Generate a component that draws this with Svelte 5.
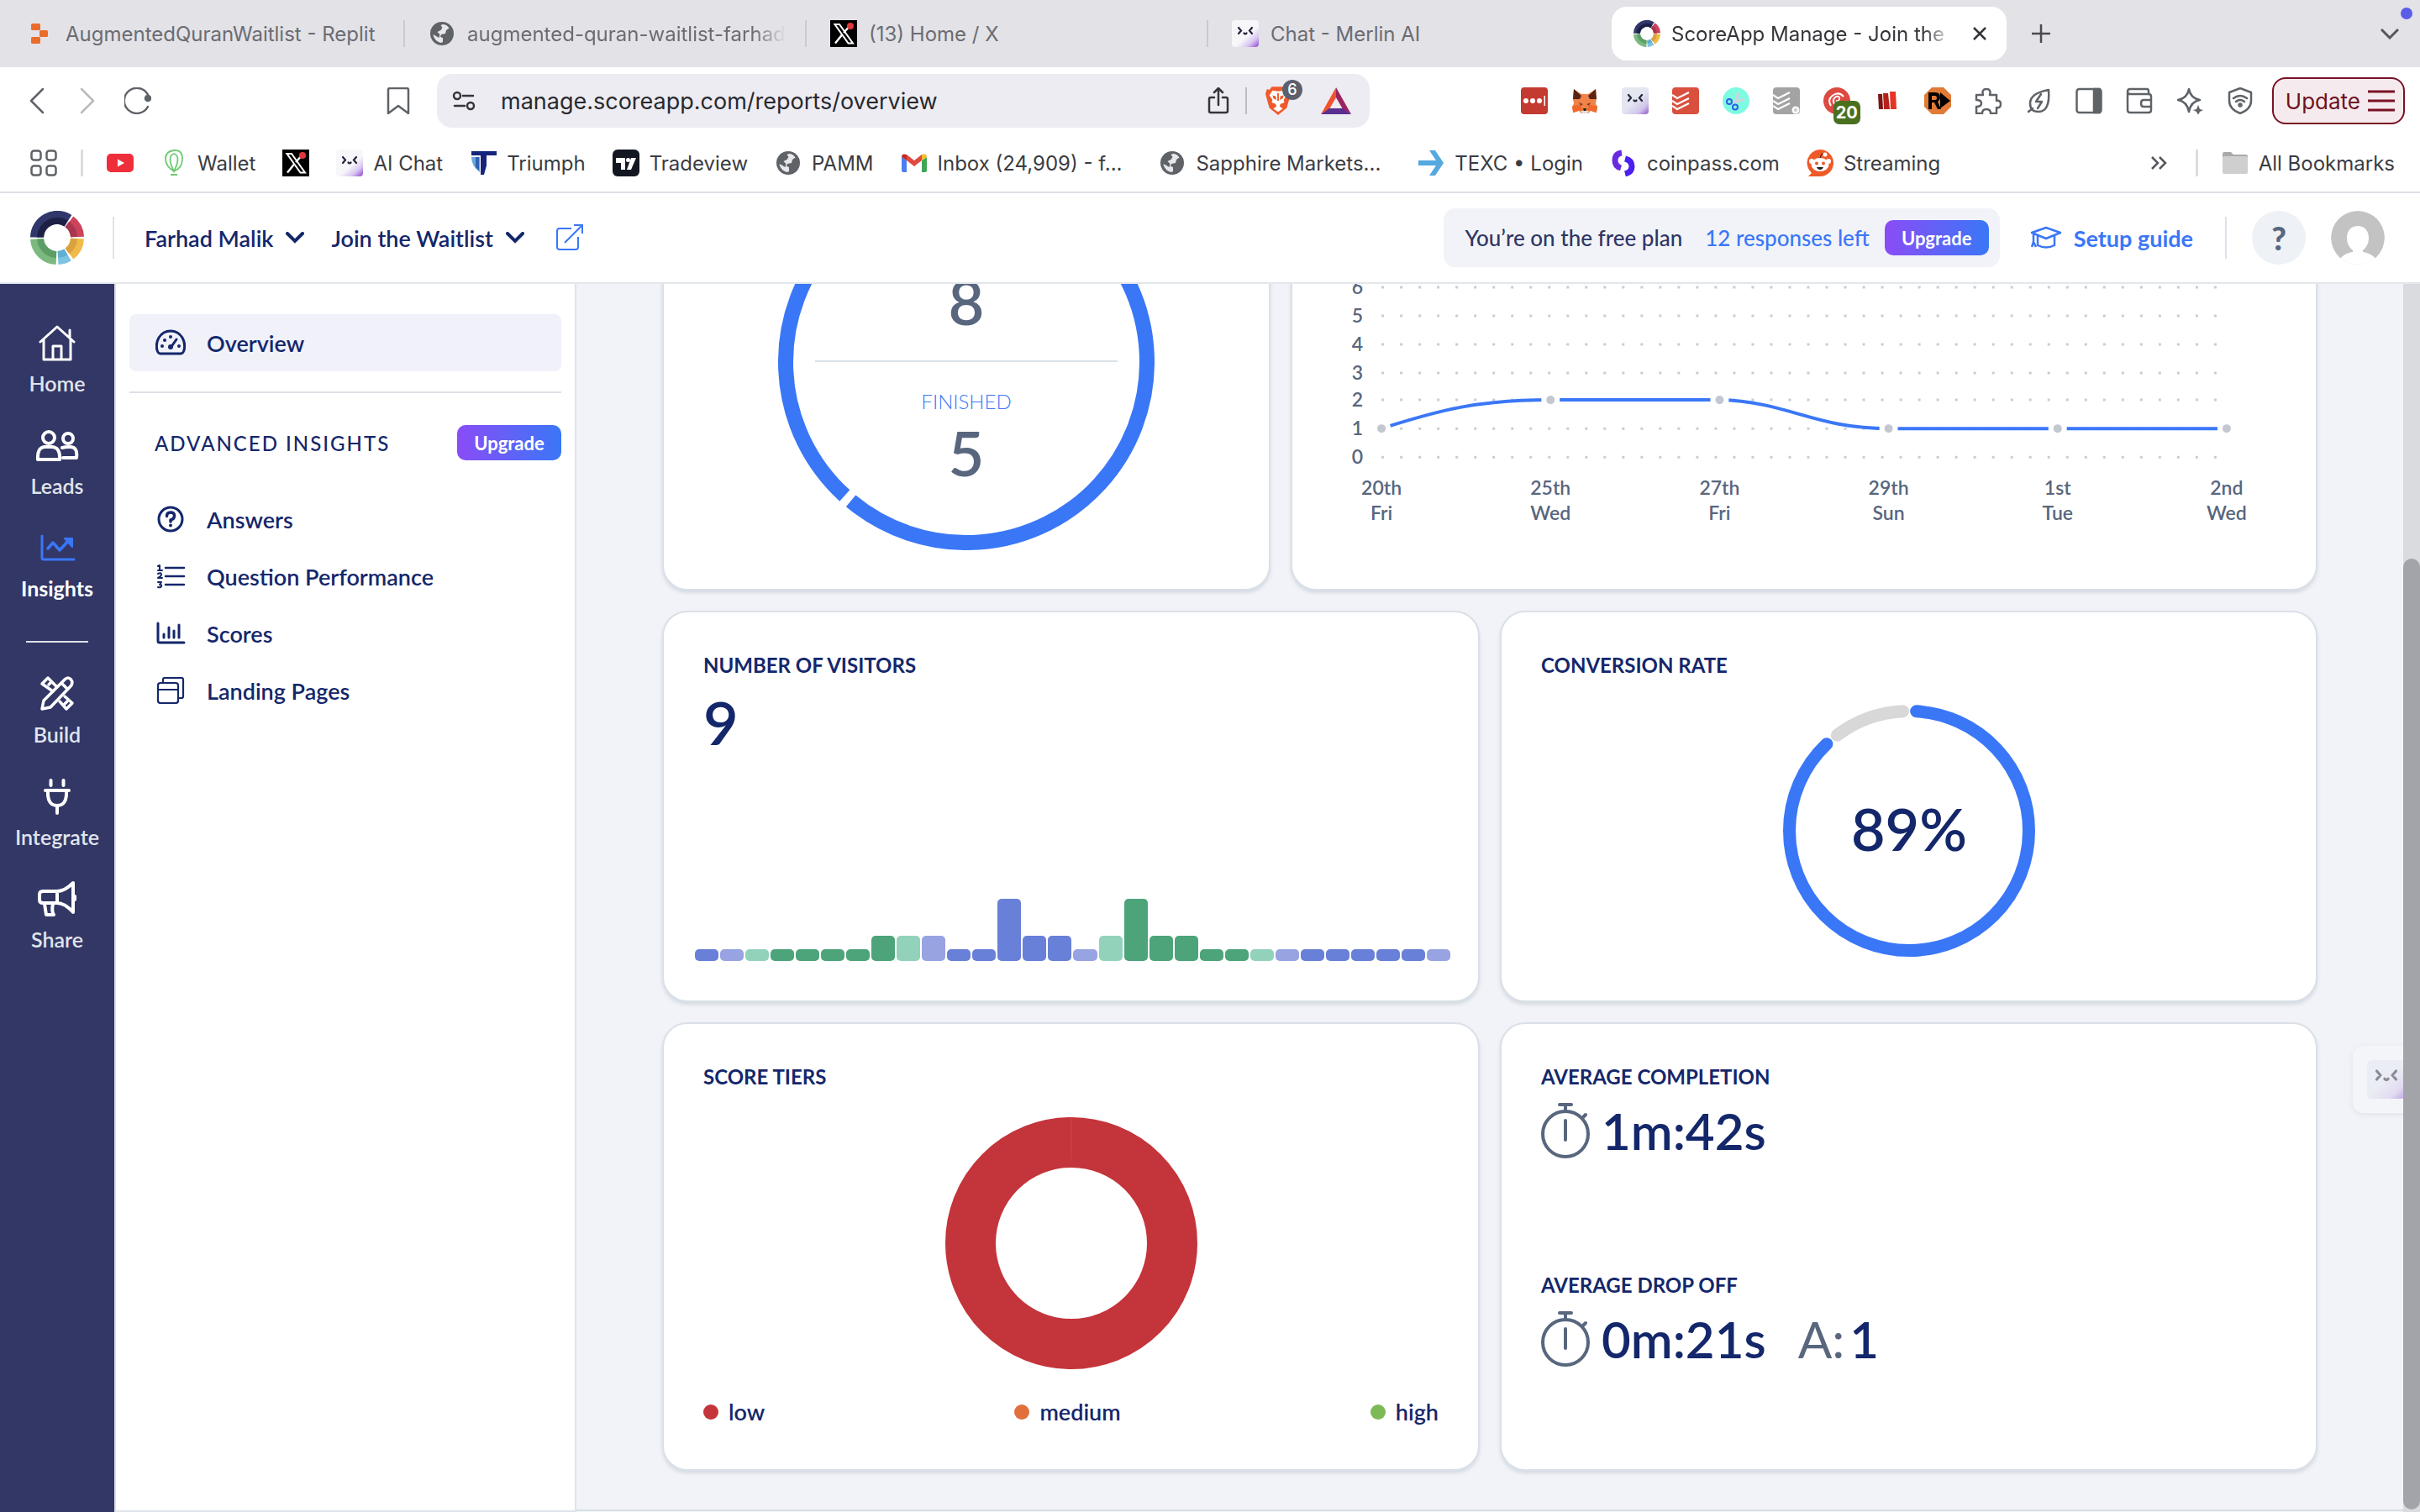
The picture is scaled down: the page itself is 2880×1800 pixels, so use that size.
<script>
  const tabs = [
    { icon: 'replit', title: 'AugmentedQuranWaitlist - Replit' },
    { icon: 'globe', title: 'augmented-quran-waitlist-farhad', faded: true },
    { icon: 'x', title: '(13) Home / X' },
    { icon: 'merlin', title: 'Chat - Merlin AI' },
    { icon: 'scoreapp', title: 'ScoreApp Manage - Join the W', active: true, faded: true }
  ];

  const extensions = ['dots', 'fox', 'merlinGray', 'todoist', 'teal', 'todoistGray', 'radar', 'books', 'hex', 'puzzle', 'leaf', 'panel', 'wallet', 'sparkle', 'shield'];

  const bookmarks = [
    { icon: 'youtube', label: '' },
    { icon: 'balloon', label: 'Wallet' },
    { icon: 'x', label: '' },
    { icon: 'merlin', label: 'AI Chat' },
    { icon: 'triumph', label: 'Triumph' },
    { icon: 'tradeview', label: 'Tradeview' },
    { icon: 'globe', label: 'PAMM' },
    { icon: 'gmail', label: 'Inbox (24,909) - f...', long: true },
    { icon: 'globe', label: 'Sapphire Markets...', long: true },
    { icon: 'texc', label: 'TEXC • Login' },
    { icon: 'coinpass', label: 'coinpass.com' },
    { icon: 'reddit', label: 'Streaming' }
  ];

  const railTop = [
    { icon: 'home', label: 'Home' },
    { icon: 'leads', label: 'Leads' },
    { icon: 'insights', label: 'Insights', active: true }
  ];
  const railBottom = [
    { icon: 'build', label: 'Build' },
    { icon: 'plug', label: 'Integrate' },
    { icon: 'megaphone', label: 'Share' }
  ];

  const insights = [
    { icon: 'question', label: 'Answers' },
    { icon: 'list', label: 'Question Performance' },
    { icon: 'bars', label: 'Scores' },
    { icon: 'windows', label: 'Landing Pages' }
  ];

  const levels = [
    { value: 6, y: 22 }, { value: 5, y: 56 }, { value: 4, y: 90 }, { value: 3, y: 124 },
    { value: 2, y: 156 }, { value: 1, y: 190 }, { value: 0, y: 224 }
  ];
  const points = [
    { x: 106, y: 190, date: '20th', day: 'Fri' },
    { x: 307, y: 156, date: '25th', day: 'Wed' },
    { x: 508, y: 156, date: '27th', day: 'Fri' },
    { x: 709, y: 190, date: '29th', day: 'Sun' },
    { x: 910, y: 190, date: '1st', day: 'Tue' },
    { x: 1111, y: 190, date: '2nd', day: 'Wed' }
  ];

  const tones = { P: 'indigo', p: 'lilac', G: 'green', g: 'mint' };
  const visitorBars = 'P1 p1 g1 G1 G1 G1 G1 G2 g2 p2 P1 P1 P3 P2 P2 p1 g2 G3 G2 G2 G1 G1 g1 p1 P1 P1 P1 P1 P1 p1'
    .split(' ')
    .map((code) => ({ tone: tones[code[0]], height: [0, 14, 30, 74][Number(code[1])] }));

  const tiers = ['low', 'medium', 'high'];
</script>

{#snippet icon(name)}
  {#if name === 'replit'}
    <svg class="ico" viewBox="0 0 32 32"><g fill="#ea6d2c"><rect x="5" y="4" width="11" height="8" rx="1.500" /><rect x="15" y="12" width="10" height="8" rx="1.500" /><rect x="5" y="20" width="11" height="8" rx="1.500" /></g></svg>
  {:else if name === 'globe'}
    <svg class="ico" viewBox="0 0 32 32"><circle cx="16" cy="16" r="14" fill="#5f6368" /><path fill="#e8e8ec" d="M17 5c3 0 6 2 7.500 4.500L21 12l-1 4-5 1-1 3 3 1v5l-2 1c-5-1-9-5-9.500-10l7 4 1-4-3-3 4-2 2-3-2-3z" /></svg>
  {:else if name === 'x'}
    <svg class="ico" viewBox="0 0 32 32"><rect width="32" height="32" fill="#000" /><path fill="none" stroke="#fff" stroke-width="2" d="M5.500 5h5.500l16 22.500h-5.500z" /><path stroke="#fff" stroke-width="2.400" d="M25 5l-9 10M14 17.500L6 27.500" /><circle cx="24" cy="7" r="4" fill="#e0393b" /></svg>
  {:else if name === 'merlin' || name === 'merlinGray'}
    <svg class="ico" viewBox="0 0 32 32"><defs><linearGradient id="mg" x1="0.2" y1="0.1" x2="1" y2="1"><stop offset="0.500" stop-color="#f7f7fa" /><stop offset="0.750" stop-color="#d9c5f0" /><stop offset="1" stop-color="#8a44d0" /></linearGradient><linearGradient id="mh" x1="0.2" y1="0.1" x2="1" y2="1"><stop offset="0.400" stop-color="#e4e6f0" /><stop offset="0.750" stop-color="#d0c4ea" /><stop offset="1" stop-color="#8d55cf" /></linearGradient></defs><rect width="32" height="32" rx="4" fill={name === 'merlin' ? 'url(#mg)' : 'url(#mh)'} /><path fill="none" stroke="#23233a" stroke-width="2.200" stroke-linecap="round" d="M8 9l3 3.500L8 16M24 9l-3 3.500 3 3.500M14.500 15.500q1.500 2 3 0" /></svg>
  {:else if name === 'scoreapp'}
    <svg class="ico" viewBox="0 0 64 64"><g fill="none" stroke-width="16"><path stroke="#30376a" d="M8 31.500A24 24 0 0 1 45 11.700" /><path stroke="#cc435c" d="M46.500 12.800A24 24 0 0 1 56 31" /><path stroke="#f0bb4b" d="M56 33A24 24 0 0 1 46.500 51" /><path stroke="#7fc3e2" d="M44.500 52.400A24 24 0 0 1 33 56" /><path stroke="#7bb97f" d="M31 56A24 24 0 0 1 8 33.500" /></g><g fill="none" stroke-width="8"><path stroke="#1c2045" d="M12 31.500A20 20 0 0 1 42.700 15" /><path stroke="#a83650" d="M43.800 16A20 20 0 0 1 52 31" /><path stroke="#d9a23e" d="M52 33A20 20 0 0 1 44 48" /><path stroke="#60afd0" d="M42.500 49A20 20 0 0 1 33 52" /><path stroke="#5c9e66" d="M31 52A20 20 0 0 1 12 33.500" /></g></svg>
  {:else if name === 'dots'}
    <svg class="ico" viewBox="0 0 32 32"><rect width="32" height="32" rx="4" fill="#c43a31" /><g fill="#fff"><circle cx="6" cy="16" r="3" /><circle cx="14" cy="16" r="3" /><circle cx="22" cy="16" r="3" /><rect x="27.500" y="10" width="1.500" height="12" /></g></svg>
  {:else if name === 'fox'}
    <svg class="ico" viewBox="0 0 32 32"><path fill="#f0834a" d="M3 2l9 6h8l9-6 1 12-1 5 2 6-2 5-6-2-3 3h-8l-3-3-6 2-2-5 2-6-1-5z" /><path fill="#ee6a2c" d="M1 22l9-1 4 6-6 1-6 2zM31 22l-9-1-4 6 6 1 6 2z" /><path fill="#5a2412" d="M3 2l9 8-2 4-8 0zM29 2l-9 8 2 4 8 0z" /><path fill="#8a3d20" d="M9 18l5 2-3 2zM23 18l-5 2 3 2z" /><path fill="#222" d="M14 25h4l-1 3h-2z" /><path fill="#ddd" d="M11 28h10l-2 3h-6z" /></svg>
  {:else if name === 'todoist' || name === 'todoistGray'}
    <svg class="ico" viewBox="0 0 32 32"><rect width="32" height="32" rx="4" fill={name === 'todoist' ? '#d9503f' : '#a3a3a3'} /><path fill="none" stroke="#fff" stroke-width="2.200" d="M0 9l6 4L20 6M0 16l6 4 14-7M0 22l6 4 14-7" />{#if name === 'todoistGray'}<circle cx="27" cy="27" r="4.500" fill="#fff" /><circle cx="27" cy="27" r="2" fill="#c9c9c9" />{/if}</svg>
  {:else if name === 'teal'}
    <svg class="ico" viewBox="0 0 32 32"><circle cx="16" cy="16" r="16" fill="#7dfbe0" /><path fill="none" stroke="#ccd5dc" stroke-width="3.500" d="M19 6l-4 12M26 14l-13 4" /><g fill="none" stroke="#2f5fe6" stroke-width="2"><circle cx="8" cy="17" r="3" /><circle cx="15" cy="23.500" r="3" /></g></svg>
  {:else if name === 'radar'}
    <svg class="ico" viewBox="0 0 32 32"><circle cx="16" cy="16" r="16" fill="#dc4a41" /><path fill="none" stroke="#fff" stroke-width="2" d="M9 22q-5-8 3-13 7-4 12 2M13 20q-3-6 2-9 5-1 4 3-1 3-4 2" /></svg>
  {:else if name === 'books'}
    <svg class="ico" viewBox="0 0 32 32"><path fill="#7d1512" d="M5 8h5l1 18H6z" /><path fill="#b5221b" d="M11 7h6l2 19h-7z" /><path fill="#e63424" d="M19 5h7l1 21h-7z" /></svg>
  {:else if name === 'hex'}
    <svg class="ico" viewBox="0 0 32 32"><path fill="#e07a36" d="M9 0h14l9 9v14l-9 9H9l-9-9V9z" /><path fill="#000" d="M5 6h8q6 0 6 6 0 3-3 5l4 9h-4l-4-8H9v8H5zM9 10v5h4q2 0 2-2.500T13 10zM19 6l12 10-12 9z" /></svg>
  {:else if name === 'puzzle'}
    <svg class="ico line" viewBox="0 0 32 32"><path d="M2 9h8q-2-7 4-7t4 7h8v7q5-1 5 4t-5 4v7h-7q0-5-5-5t-5 5H2v-8q6 0 6-4t-6-4z" /></svg>
  {:else if name === 'leaf'}
    <svg class="ico line" viewBox="0 0 32 32"><path d="M28 3q2 26-12 26-10 0-10-10Q6 7 28 3zM9 25l-5 4M19 8l-6 9h7l-5 8" /></svg>
  {:else if name === 'panel'}
    <svg class="ico line" viewBox="0 0 32 32"><rect x="1.500" y="2" width="29" height="28" rx="3" /><path fill="#5f6368" d="M22 2h7v28h-7z" /></svg>
  {:else if name === 'wallet'}
    <svg class="ico line" viewBox="0 0 32 32"><path d="M2 6v21q0 3 3 3h22q3 0 3-3V11q0-3-3-3H5Q2 8 2 5t3-3h20q2 0 2 3v3M30 15h-9q-3 0-3 4t3 4h9" /></svg>
  {:else if name === 'sparkle'}
    <svg class="ico line" viewBox="0 0 32 32"><path d="M15 2q2 11 13 13-11 2-13 14Q13 17 2 15 13 13 15 2z" /><path fill="#5f6368" stroke="none" d="M26 21l2 5 4 1-4 2-2 4-2-4-4-2 4-1z" /></svg>
  {:else if name === 'shield'}
    <svg class="ico line" viewBox="0 0 32 32"><path d="M16 1l13 5v10q0 10-13 15Q3 26 3 16V6zM8 13q8-6 16 0M11 17q5-4 10 0" /><circle cx="16" cy="21" r="1.500" /></svg>
  {:else if name === 'youtube'}
    <svg class="ico" viewBox="0 0 32 32"><rect y="5" width="32" height="22" rx="5" fill="#ee2f3b" /><path fill="#fff" d="M13 11.500l8 4.500-8 4.500z" /></svg>
  {:else if name === 'balloon'}
    <svg class="ico" viewBox="0 0 32 32"><g fill="none" stroke="#6ccb70" stroke-width="1.800"><path d="M16 26Q6 20 6 11T16 1t10 10-10 15zM16 26Q7 8 16 5q9 3 0 21zM12 30h8" /></g></svg>
  {:else if name === 'triumph'}
    <svg class="ico" viewBox="0 0 32 32"><path fill="#15257c" d="M2 2h30v5H20v12l-3 11h-4V7H2z" /><path fill="#6aa6dc" d="M2 9h10v18Q2 20 2 9z" /><path fill="#2d62b0" d="M7 9h4v16l-4-4z" /></svg>
  {:else if name === 'tradeview'}
    <svg class="ico" viewBox="0 0 32 32"><rect width="32" height="32" rx="6" fill="#131722" /><g fill="#fff"><path d="M4 10h11v14h-5v-8H4z" /><circle cx="18.500" cy="12.500" r="2.500" /><path d="M22 10h6l-6 14h-5z" /></g></svg>
  {:else if name === 'gmail'}
    <svg class="ico" viewBox="0 0 32 32"><path fill="#4a7df0" d="M1 9l6 4v14H3q-2 0-2-2z" /><path fill="#3fa655" d="M31 9l-6 4v14h4q2 0 2-2z" /><path fill="#e04a3f" d="M7 6l9 7 9-7v7l-9 7-9-7z" /><path fill="#c12d25" d="M1 9q0-5 6-3v7z" /><path fill="#f6bb2a" d="M31 9q0-5-6-3v7z" /></svg>
  {:else if name === 'texc'}
    <svg class="ico" viewBox="0 0 32 32"><path fill="#55a9de" d="M1 13h21L14 1h7l10 15-10 15h-7l8-12H1z" /></svg>
  {:else if name === 'coinpass'}
    <svg class="ico" viewBox="0 0 32 32"><g fill="none" stroke-width="7"><path stroke="#6a2be0" d="M14 4Q6 5 6 13q0 7 7 9" /><path stroke="#4b1ff0" d="M18 11q8 2 8 9 0 7-8 9" /></g></svg>
  {:else if name === 'reddit'}
    <svg class="ico" viewBox="0 0 32 32"><path fill="#ef5a28" d="M16 0a16 16 0 1 1 0 32H2l4-4A16 16 0 0 1 16 0z" /><ellipse cx="16" cy="18" rx="10.500" ry="8" fill="#fff" /><circle cx="6" cy="14" r="3" fill="#fff" /><circle cx="26" cy="14" r="3" fill="#fff" /><path fill="none" stroke="#222" d="M16 10l2-5 4 1" /><circle cx="22" cy="6" r="2.500" fill="#fff" /><circle cx="12" cy="16.500" r="2" fill="#ef5a28" /><circle cx="20" cy="16.500" r="2" fill="#ef5a28" /><path fill="#222" d="M12 21h8q-1 3-4 3t-4-3z" /></svg>
  {:else if name === 'home'}
    <svg class="rail-ico" viewBox="0 0 44 44"><path d="M2 21L22 3l20 18M6 18v24h32V18M37 15V7M17 42V26h10v16" stroke-width="3" /></svg>
  {:else if name === 'leads'}
    <svg class="rail-ico wide" viewBox="0 0 52 44"><g stroke-width="4"><circle cx="16" cy="13" r="7" /><circle cx="39" cy="14" r="6" /><path d="M3 39q-1-15 9-15h7q11 0 10 15zM33 37h16q2-13-8-13-6 0-9 1" /></g></svg>
  {:else if name === 'insights'}
    <svg class="rail-ico blue" viewBox="0 0 44 44"><path stroke-width="3" d="M4 8v26q0 2 2 2h36" /><path stroke-width="3.500" d="M11 23l6-7 8 9 12-13" /><path fill="#3a77f7" stroke-width="2" d="M31 11h9v10z" /></svg>
  {:else if name === 'build'}
    <svg class="rail-ico" viewBox="0 0 44 44"><g stroke-width="3.500"><path d="M4 40l2-10L31 5q4-4 7.500 0 3 4-.5 8L14 38zM27 9l7 7" /><path d="M17 19L4 10l7-7 10 10M12 11l3-3M25 31l8 9 7-7-9-8M31 34l3-3" /></g></svg>
  {:else if name === 'plug'}
    <svg class="rail-ico" viewBox="0 0 44 44"><g stroke-width="4"><path d="M14.500 3v6M29.500 3v6M8 15h28M11 15q-1 18 11 18t11-18M22 33v9" /></g></svg>
  {:else if name === 'megaphone'}
    <svg class="rail-ico wide" viewBox="0 0 52 44"><g stroke-width="4"><path d="M5 17q0-4 4-4h17q9 0 19-10v35Q35 27 26 27H9q-4 0-4-4zM26 13v14M11 28l2 13h9q-3-4-1-13" /><path d="M47 19v4" /></g></svg>
  {:else if name === 'gauge'}
    <svg class="nav-ico" viewBox="0 0 36 32"><path stroke-width="3" d="M6 29h24q3 0 4-4 2-8-2-15-5-8-14-8T4 10q-4 7-2 15 1 4 4 4z" /><path stroke-width="3" d="M18 22l7-10" /><circle cx="18" cy="21" r="3" fill="#14276b" stroke="none" /><g fill="#14276b" stroke="none"><circle cx="8" cy="20" r="2" /><circle cx="11" cy="13" r="2" /><circle cx="18" cy="9" r="2" /><circle cx="28" cy="20" r="2" /></g></svg>
  {:else if name === 'question'}
    <svg class="nav-ico" viewBox="0 0 36 32"><circle cx="18" cy="16" r="14" stroke-width="3" /><path stroke-width="3.500" d="M13.500 12.500q0-4.500 4.500-4.500t4.500 4-4.500 5v2" /><circle cx="18" cy="23.500" r="2" fill="#14276b" stroke="none" /></svg>
  {:else if name === 'list'}
    <svg class="nav-ico" viewBox="0 0 36 32"><path stroke-width="2.500" d="M12 6h22M12 16h22M12 26h22" /><path stroke-width="2" d="M3 4l2-1v6M3 9h5M3 13q4-2 4 1 0 2-4 4h5M3 23h4l-2 3q3 0 2 2-1 2-4 1" /></svg>
  {:else if name === 'bars'}
    <svg class="nav-ico" viewBox="0 0 36 32"><path stroke-width="3" d="M3 4v21q0 2 2 2h29" /><path stroke-width="3" d="M10 21v-4M16 21V9M22 21v-8M28 21V6" /></svg>
  {:else if name === 'windows'}
    <svg class="nav-ico" viewBox="0 0 36 32"><g stroke-width="2.200"><rect x="3" y="7" width="24" height="24" rx="3" /><path d="M3 15h24M9 7V3q0-2 2-2h20q2 0 2 2v20q0 2-2 2h-4" /></g></svg>
  {/if}
{/snippet}

{#snippet stopwatch()}
  <svg class="stopwatch" viewBox="0 0 58 66" aria-hidden="true"><circle cx="29" cy="37" r="27" /><path d="M29 21v23M29 2v8M22 2h14M49 18l4-4" /></svg>
{/snippet}

<div class="window">
  <div class="tabstrip">
    {#each tabs as tab}
      <button class="tab" class:active={tab.active}>
        {@render icon(tab.icon)}
        <span class="tab-title" class:faded={tab.faded}>{tab.title}</span>
        {#if tab.active}
          <svg class="close" viewBox="0 0 16 16"><path d="M1 1l14 14M15 1L1 15" /></svg>
        {/if}
      </button>
    {/each}
    <button class="new-tab" aria-label="New tab"><svg class="plus" viewBox="0 0 22 22"><path d="M11 0v22M0 11h22" /></svg></button>
    <button class="tab-search" aria-label="Search tabs"><svg class="chev" viewBox="0 0 22 14"><path d="M1 2l10 10L21 2" /></svg><i class="dot"></i></button>
  </div>

  <div class="toolbar">
    <button aria-label="Back"><svg class="ico nav" viewBox="0 0 32 32"><path d="M23 2L9 16l14 14" /></svg></button>
    <button aria-label="Forward"><svg class="ico nav dim" viewBox="0 0 32 32"><path d="M9 2l14 14L9 30" /></svg></button>
    <button aria-label="Reload"><svg class="ico nav" viewBox="0 0 32 32"><path d="M28 23A15 15 0 1 1 29 11" /><circle cx="28" cy="13" r="3" fill="#5f6368" /></svg></button>
    <button class="bookmark" aria-label="Bookmark this page"><svg class="ico nav" viewBox="0 0 32 32"><path d="M4 3q0-2 2-2h20q2 0 2 2v28L16 22 4 31z" /></svg></button>
    <div class="address">
      <svg class="ico site" viewBox="0 0 32 32"><circle cx="8" cy="10" r="4" /><path d="M15 10h12M5 22h12" /><circle cx="24" cy="22" r="4" /></svg>
      <input aria-label="Address" value="manage.scoreapp.com/reports/overview" />
      <svg class="ico share" viewBox="0 0 32 32"><path d="M11 12H7q-2 0-2 2v14q0 2 2 2h18q2 0 2-2V14q0-2-2-2h-4M16 21V1M11 6l5-5 5 5" /></svg>
      <i class="rule"></i>
      <span class="brave">
        <svg viewBox="0 0 32 36"><path fill="#f0592b" d="M8 0h16l3 4 3-1 2 6-1 4-4 14-11 9L5 27 1 13 0 9l2-6 3 1z" /><path fill="#fff" d="M16 6l7-1 4 6-4 6 1 3-5 2-1 3 4 3-6 4-6-4 4-3-1-3-5-2 1-3-4-6 4-6z" /><path fill="#f0592b" d="M9 11l4 1 1 5-4-2zM23 11l-4 1-1 5 4-2zM15 8h2v10h-2z" /></svg>
        <b>6</b>
      </span>
      <svg class="bat" viewBox="0 0 36 32"><path fill="#f0532d" d="M18 0v12l-8 14L0 32z" /><path fill="#9b2460" d="M18 0l18 32-10-6-8-14z" /><path fill="#5b2e91" d="M0 32l10-7h16l10 7z" /></svg>
    </div>
    <div class="extensions">
      {#each extensions as name}
        <span class="ext">{@render icon(name)}{#if name === 'radar'}<b>20</b>{/if}</span>
      {/each}
    </div>
    <button class="update">Update <svg viewBox="0 0 32 26"><path d="M0 2h32M0 13h32M0 24h32" /></svg></button>
  </div>

  <nav class="bookmarks" aria-label="Bookmarks">
    <svg class="ico nav" viewBox="0 0 32 32"><rect x="1.500" y="1.500" width="11" height="11" rx="3" /><rect x="19.500" y="1.500" width="11" height="11" rx="3" /><rect x="1.500" y="19.500" width="11" height="11" rx="3" /><rect x="19.500" y="19.500" width="11" height="11" rx="3" /></svg>
    <i class="rule"></i>
    {#each bookmarks as mark}
      <a href="#top" class:long={mark.long}>{@render icon(mark.icon)}{#if mark.label}<span>{mark.label}</span>{/if}</a>
    {/each}
    <button class="more" aria-label="More bookmarks"><svg viewBox="0 0 20 16"><path d="M2 1l7 7-7 7M11 1l7 7-7 7" /></svg></button>
    <i class="rule"></i>
    <a href="#top"><svg class="ico" viewBox="0 0 32 32"><path fill="#a9a9a9" d="M1 5q0-2 2-2h8l3 3h15q2 0 2 2v5H1z" /><rect x="1" y="8" width="30" height="21" rx="2" fill="#cfcfcf" /></svg><span>All Bookmarks</span></a>
  </nav>

  <header class="app-header">
    <span class="logo">{@render icon('scoreapp')}</span>
    <i class="split"></i>
    <button class="picker">Farhad Malik <svg viewBox="0 0 22 14"><path d="M2 2l9 9 9-9" /></svg></button>
    <button class="picker">Join the Waitlist <svg viewBox="0 0 22 14"><path d="M2 2l9 9 9-9" /></svg></button>
    <a class="external" href="#top" aria-label="Open page"><svg viewBox="0 0 32 32"><path d="M18 5H4Q1 5 1 8v19q0 3 3 3h19q3 0 3-3V15M21 1h10v10M31 1L10 22" /></svg></a>
    <div class="plan">
      <span>You’re on the free plan</span>
      <a href="#top">12 responses left</a>
      <button class="upgrade">Upgrade</button>
    </div>
    <a class="guide" href="#top"><svg viewBox="0 0 38 28"><path d="M2 8l17-6 17 6-17 7zM9 11v12q10 5 20 0V11M4 9v10M2 25l2-6 3 6" /></svg>Setup guide</a>
    <i class="split"></i>
    <button class="help" aria-label="Help">?</button>
    <svg class="avatar" viewBox="0 0 64 64"><circle cx="32" cy="32" r="32" fill="#c3c3c3" /><path fill="#fff" d="M32 18c8 0 13 6 13 14 0 7-3 12-7 15v2c7 1 12 4 15 8l-4 7H15l-4-7c3-4 8-7 15-8v-2c-4-3-7-8-7-15 0-8 5-14 13-14z" /></svg>
  </header>

  <div class="body">
    <nav class="rail" aria-label="Main">
      <div class="rail-group">
        {#each railTop as item}
          <a href="#top" class:active={item.active}>{@render icon(item.icon)}<span>{item.label}</span></a>
        {/each}
      </div>
      <hr />
      <div class="rail-group">
        {#each railBottom as item}
          <a href="#top">{@render icon(item.icon)}<span>{item.label}</span></a>
        {/each}
      </div>
    </nav>

    <nav class="side" aria-label="Insights">
      <a class="side-item current" href="#top">{@render icon('gauge')}Overview</a>
      <hr />
      <div class="side-head"><h2>ADVANCED INSIGHTS</h2><button class="upgrade">Upgrade</button></div>
      {#each insights as item}
        <a class="side-item" href="#top">{@render icon(item.icon)}{item.label}</a>
      {/each}
    </nav>

    <main>
      <div class="row top">
        <section class="card ring-card">
          <svg viewBox="0 0 448 448">
            <circle class="ring" cx="224" cy="224" r="215" pathLength="360" stroke-dasharray="357.400 2.600" transform="rotate(132.300 224 224)" />
            <text class="figure" x="224" y="180">8</text>
            <path class="hair" d="M44 223h360" />
            <text class="caption" x="224" y="280">FINISHED</text>
            <text class="figure" x="224" y="360">5</text>
          </svg>
        </section>
        <section class="card chart-card">
          <svg viewBox="0 0 1217 340">
            {#each levels as level}
              <path class="grid" d={`M106 ${level.y}H1100`} />
              <text class="axis end" x="84" y={level.y + 8}>{level.value}</text>
            {/each}
            <path class="line" d="M106 190C175 168 220 156 307 156H508C590 158 620 190 709 190H1111" />
            {#each points as p}
              <circle class="point" cx={p.x} cy={p.y} r="8" />
              <text class="axis" x={p.x} y="269">{p.date}</text>
              <text class="axis" x={p.x} y="299">{p.day}</text>
            {/each}
          </svg>
        </section>
      </div>

      <div class="row middle">
        <section class="card">
          <h3>NUMBER OF VISITORS</h3>
          <p class="count">9</p>
          <div class="bars">
            {#each visitorBars as bar}
              <i class={bar.tone} style:height={`${bar.height}px`}></i>
            {/each}
          </div>
        </section>
        <section class="card">
          <h3>CONVERSION RATE</h3>
          <svg class="dial" viewBox="0 0 300 300">
            <g fill="none" stroke-width="15" stroke-linecap="round" transform="rotate(-90 150 150)">
              <circle cx="150" cy="150" r="142.500" pathLength="360" stroke="#d8d8d8" stroke-dasharray="34 326" stroke-dashoffset="-323" />
              <circle cx="150" cy="150" r="142.500" pathLength="360" stroke="#3a77f7" stroke-dasharray="313 47" stroke-dashoffset="-3.500" />
            </g>
            <text class="percent" x="150" y="174">89%</text>
          </svg>
        </section>
      </div>

      <div class="row bottom">
        <section class="card">
          <h3>SCORE TIERS</h3>
          <svg class="dial" viewBox="0 0 300 300"><circle cx="150" cy="150" r="120" fill="none" stroke="#c4343b" stroke-width="60" /><path d="M150 0v50" stroke="#c9494f" /></svg>
          <ul class="legend">
            {#each tiers as tier}
              <li><i class={tier}></i>{tier}</li>
            {/each}
          </ul>
        </section>
        <section class="card">
          <h3>AVERAGE COMPLETION</h3>
          <p class="time">{@render stopwatch()}<b>1m:42s</b></p>
          <h3>AVERAGE DROP OFF</h3>
          <p class="time">{@render stopwatch()}<b>0m:21s</b><span class="answer">A:<b>1</b></span></p>
        </section>
      </div>
      <div class="baseline"></div>
      <button class="assistant" aria-label="Assistant">{@render icon('merlinGray')}</button>
    </main>
    <div class="scrollbar"><i></i></div>
  </div>
</div>

<style>
  :global(body) { margin: 0; }
  .window { height: 100vh; display: flex; flex-direction: column; overflow: hidden; background: #fff; font-family: Inter, "Liberation Sans", sans-serif; font-size: 24px; color: #3b3c42; }
  .window :global(*) { box-sizing: border-box; }
  button { border: 0; background: none; padding: 0; font: inherit; color: inherit; display: flex; align-items: center; }
  a { color: inherit; text-decoration: none; }
  svg { display: block; flex: none; }
  hr { border: 0; margin: 0; }
  h2, h3, p, ul { margin: 0; padding: 0; }
  .ico { width: 32px; height: 32px; }
  .ico.line, .ico.nav { fill: none; stroke: #5f6368; stroke-width: 2.500; stroke-linejoin: round; stroke-linecap: round; }
  .ico.dim { stroke: #b9babd; }

  .tabstrip { flex: none; height: 80px; display: flex; align-items: center; padding-left: 4px; background: #e3e2e7; }
  .tab { position: relative; flex: 0 1 478px; min-width: 0; height: 64px; gap: 14px; padding: 0 12px 0 28px; color: #6b6c72; }
  .tab:not(.active)::after { content: ""; position: absolute; right: 0; top: 16px; width: 2px; height: 32px; background: #cbcad1; }
  .tab:nth-child(4)::after { display: none; }
  .tab.active { flex-basis: 470px; margin-left: 2px; padding: 0 24px 0 26px; background: #fff; border-radius: 18px; color: #35363a; gap: 13px; }
  .tab .ico { flex: none; }
  .tab-title { text-align: left; white-space: nowrap; }
  .tab-title.faded { mask-image: linear-gradient(90deg, #000 90%, transparent); }
  .active .tab-title { flex: 1; min-width: 0; overflow: hidden; }
  .close { width: 16px; height: 16px; margin-left: 12px; stroke: #35363a; stroke-width: 2.500; }
  .new-tab { margin-left: 30px; }
  .plus { width: 22px; height: 22px; stroke: #4a4b50; stroke-width: 2.500; }
  .tab-search { position: relative; margin-left: auto; margin-right: 25px; }
  .chev { width: 22px; height: 14px; fill: none; stroke: #55565c; stroke-width: 3; }
  .dot { position: absolute; right: -16px; top: -24px; width: 14px; height: 14px; border-radius: 50%; background: #5b5ce8; }

  .toolbar { flex: none; height: 80px; display: flex; align-items: center; padding: 0 18px 0 28px; gap: 28px; }
  .bookmark { margin-left: 250px; }
  .address { flex: 0 1 1110px; height: 64px; margin-left: 2px; display: flex; align-items: center; padding: 0 22px 0 16px; border-radius: 18px; background: #edecf2; }
  .address input { flex: 1; min-width: 0; margin-left: 28px; padding: 0; border: 0; background: none; font: inherit; font-size: 27px; color: #28292e; outline: 0; }
  .site, .share { fill: none; stroke: #35363a; stroke-width: 2.500; stroke-linecap: round; stroke-linejoin: round; }
  .address .rule { width: 2px; height: 32px; margin: 0 22px 0 16px; background: #bdbdc4; }
  .brave { position: relative; margin-right: 36px; }
  .brave svg { width: 30px; height: 36px; }
  .brave b { position: absolute; left: 20px; top: -7px; width: 24px; height: 24px; border-radius: 12px; background: #5d5f6d; color: #fff; font-size: 18px; line-height: 24px; font-weight: 500; text-align: center; }
  .bat { width: 36px; height: 32px; }
  .extensions { display: flex; gap: 28px; margin-left: auto; }
  .ext { position: relative; }
  .ext b { position: absolute; left: 12px; top: 16px; width: 32px; height: 28px; border-radius: 7px; background: #4a701f; color: #fff; font-size: 20px; line-height: 28px; text-align: center; }
  .update { height: 56px; margin-left: -6px; padding: 0 10px 0 14px; gap: 9px; border: 2px solid #7a1225; border-radius: 16px; background: #f5ebee; color: #6f1022; font-size: 26px; }
  .update svg { width: 32px; height: 26px; stroke: #7a1225; stroke-width: 3; }

  .bookmarks { flex: none; height: 70px; display: flex; align-items: center; gap: 32px; padding: 0 30px 0 36px; border-bottom: 2px solid #e0dfe6; white-space: nowrap; }
  .bookmarks .rule { width: 3px; height: 32px; margin: 0 -4px; background: #dcdbe1; }
  .bookmarks a { display: flex; align-items: center; gap: 12px; }
  .bookmarks .long { padding-right: 12px; }
  .more { margin-left: auto; margin-right: 6px; }
  .more svg { width: 20px; height: 16px; fill: none; stroke: #55565c; stroke-width: 2.500; }

  .app-header, .body { font-family: Lato, "Liberation Sans", sans-serif; font-weight: 600; color: #14276b; }
  .app-header { flex: none; height: 108px; display: flex; align-items: center; padding: 0 42px 0 36px; border-bottom: 2px solid #e2e7ec; font-size: 27px; white-space: nowrap; }
  .logo .ico { width: 64px; height: 64px; }
  .split { width: 2px; height: 50px; background: #dfe2ea; margin: 0 36px 0 34px; }
  .picker { gap: 15px; margin-right: 32px; }
  .picker svg { width: 22px; height: 14px; fill: none; stroke: #14276b; stroke-width: 4; stroke-linecap: round; }
  .external { margin-left: 6px; }
  .external svg { width: 32px; height: 32px; fill: none; stroke: #3a77f7; stroke-width: 2; }
  .plan { height: 70px; margin-left: auto; padding: 0 13px 0 26px; display: flex; align-items: center; border-radius: 14px; background: #f2f3f8; font-size: 26px; font-weight: 500; color: #2f3665; }
  .plan a { margin: 0 18px 0 27px; color: #3a77f7; }
  .upgrade { width: 124px; height: 42px; justify-content: center; border-radius: 10px; background: linear-gradient(90deg, #8a4cf6, #3a77f7); color: #fff; font-size: 22px; font-weight: 700; }
  .guide { display: flex; align-items: center; gap: 14px; margin-left: 36px; color: #3a77f7; font-weight: 700; }
  .guide svg { width: 38px; height: 28px; fill: none; stroke: #3a77f7; stroke-width: 2.500; stroke-linejoin: round; }
  .guide + .split { margin: 0 30px 0 38px; }
  .help { width: 64px; height: 64px; justify-content: center; border-radius: 50%; background: #eef1f6; color: #58667e; font-size: 38px; font-weight: 900; }
  .avatar { width: 64px; height: 64px; margin-left: 30px; border-radius: 50%; }

  .body { flex: 1; min-height: 0; display: flex; }
  .rail { flex: none; width: 138px; padding-top: 48px; background: #323766; border-right: 2px solid #dce0e6; font-size: 25px; }
  .rail-group { display: flex; flex-direction: column; gap: 34px; }
  .rail a { display: flex; flex-direction: column; align-items: center; gap: 8px; line-height: 36px; color: #e0e4ea; }
  .rail a.active { color: #fff; font-weight: 700; }
  .rail hr { width: 74px; height: 2px; margin: 45px auto 39px; background: #dde1ea; }
  .rail-ico { width: 44px; height: 44px; fill: none; stroke: #fff; stroke-linejoin: round; stroke-linecap: round; }
  .rail-ico.wide { width: 52px; }
  .rail-ico.blue { stroke: #3a77f7; }

  .side { flex: none; width: 548px; padding: 36px 16px; border-right: 2px solid #dfe4ea; border-bottom: 2px solid #dfe4ea; font-size: 27px; }
  .side-item { height: 68px; display: flex; align-items: center; gap: 25px; padding-left: 31px; border-radius: 8px; }
  .side-item.current { background: #f0f1f9; }
  .side hr { height: 2px; margin: 24px 0 38px; background: #dde2e8; }
  .side-head { display: flex; align-items: center; justify-content: space-between; margin-bottom: 36px; padding-left: 30px; }
  h2 { font-size: 24px; font-weight: 500; letter-spacing: 2px; }
  .nav-ico { width: 36px; height: 32px; fill: none; stroke: #14276b; stroke-linecap: round; stroke-linejoin: round; }

  main { position: relative; flex: 1; min-width: 0; padding: 0 102px; display: flex; flex-direction: column; justify-content: flex-end; gap: 24px; overflow: hidden; background: #f2f3f8; }
  .row { flex: none; display: grid; grid-template-columns: 1fr 1fr; gap: 24px; }
  .row.top { grid-template-columns: 724fr 1222fr; }
  .middle { min-height: 466px; }
  .bottom { min-height: 534px; }
  .card { display: flex; flex-direction: column; padding: 46px 47px; border: 2px solid #dae0e8; border-radius: 30px; background: #fff; box-shadow: 0 3px 4px #d5dae3; }
  .ring-card svg { width: 448px; height: 448px; margin: auto; }
  .chart-card { justify-content: flex-end; padding: 0 0 41px; }
  .ring { fill: none; stroke: #3a77f7; stroke-width: 18; }
  .hair { stroke: #dae1e7; stroke-width: 2; }
  text { text-anchor: middle; }
  .figure { font-size: 74px; font-weight: 600; fill: #58667e; }
  .caption { font-size: 24px; font-weight: 300; fill: #3a77f7; }
  .percent { font-size: 70px; font-weight: 600; fill: #14276b; }
  .axis { font-size: 23px; font-weight: 600; fill: #58667e; }
  .axis.end { text-anchor: end; }
  .grid { stroke: #c8cdd5; stroke-width: 3; stroke-dasharray: 3 19; }
  .line { fill: none; stroke: #3a77f7; stroke-width: 4; }
  .point { fill: #c3c8d0; stroke: #fff; stroke-width: 6; }

  h3 { font-size: 24px; line-height: 34px; font-weight: 700; }
  .count { margin-top: 10px; font-size: 72px; line-height: 80px; }
  .bars { display: flex; align-items: flex-end; gap: 2px; margin: auto -14px 1px -10px; }
  .bars i { flex: 1; border-radius: 5px; }
  .indigo { background: #6980d8; }
  .lilac { background: #98a3e2; }
  .green { background: #4da47a; }
  .mint { background: #92d2bb; }
  .dial { width: 300px; height: 300px; margin: 31px auto 0; }
  .middle .dial { margin-top: 30px; }
  .legend { display: flex; justify-content: space-between; margin-top: 33px; list-style: none; font-size: 27px; line-height: 36px; }
  .legend li { display: flex; align-items: center; gap: 12px; }
  .legend i { width: 18px; height: 18px; border-radius: 50%; }
  .low { background: #c4343b; }
  .medium { background: #e2703c; }
  .high { background: #7dba57; }
  .time { height: 72px; margin-top: 11px; display: flex; align-items: center; font-size: 60px; line-height: 72px; }
  .time + h3 { margin-top: 131px; }
  .time b { font-weight: 600; }
  .stopwatch { width: 58px; height: 66px; margin-right: 14px; fill: none; stroke: #58667e; stroke-width: 4; stroke-linecap: round; }
  .answer { display: flex; gap: 6px; margin-left: 38px; color: #58667e; font-weight: 400; }
  .answer b { color: #14276b; }
  .baseline { flex: none; height: 3px; margin: 22px -102px 0; border-top: 2px solid #d8dfe6; }
  .assistant { position: absolute; right: -20px; top: 907px; width: 80px; height: 80px; padding-left: 17px; border-radius: 12px; background: #f4f5f9; box-shadow: 0 2px 6px #dfe1e8; }
  .assistant .ico { width: 46px; height: 48px; opacity: 0.500; }
  .scrollbar { flex: none; width: 20px; padding: 327px 0 3px; display: flex; background: #dadbdf; z-index: 1; }
  .scrollbar i { flex: 1; border-radius: 10px; background: #a3a4a9; }
</style>
